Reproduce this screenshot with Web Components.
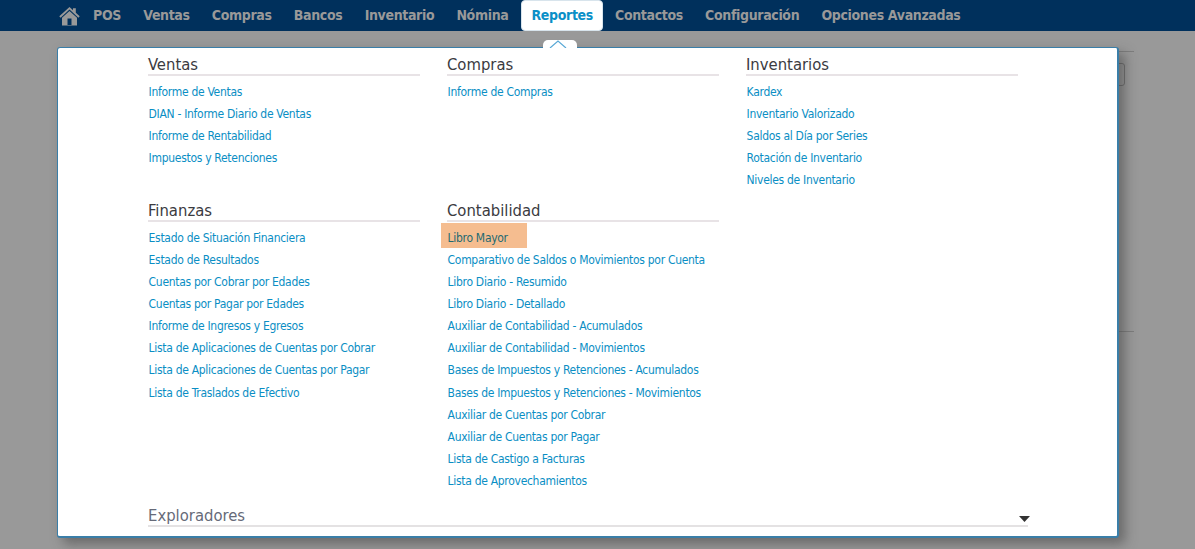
<!DOCTYPE html>
<html lang="es"><head><meta charset="utf-8"><title>Reportes</title>
<style>
html,body{margin:0;height:549px;overflow:hidden;background:#999;font-family:"DejaVu Sans Condensed","DejaVu Sans",sans-serif}
</style></head><body>
<app-shell>
<top-nav slot="nav">
  <nav-item>POS</nav-item><nav-item>Ventas</nav-item><nav-item>Compras</nav-item><nav-item>Bancos</nav-item><nav-item>Inventario</nav-item><nav-item>Nómina</nav-item><nav-item active>Reportes</nav-item><nav-item>Contactos</nav-item><nav-item>Configuración</nav-item><nav-item>Opciones Avanzadas</nav-item>
</top-nav>
<mega-menu slot="menu">
  <menu-section title="Ventas"><menu-link>Informe de Ventas</menu-link><menu-link>DIAN - Informe Diario de Ventas</menu-link><menu-link>Informe de Rentabilidad</menu-link><menu-link>Impuestos y Retenciones</menu-link></menu-section>
  <menu-section title="Compras"><menu-link>Informe de Compras</menu-link></menu-section>
  <menu-section title="Inventarios"><menu-link>Kardex</menu-link><menu-link>Inventario Valorizado</menu-link><menu-link>Saldos al Día por Series</menu-link><menu-link>Rotación de Inventario</menu-link><menu-link>Niveles de Inventario</menu-link></menu-section>
  <menu-section title="Finanzas"><menu-link>Estado de Situación Financiera</menu-link><menu-link>Estado de Resultados</menu-link><menu-link>Cuentas por Cobrar por Edades</menu-link><menu-link>Cuentas por Pagar por Edades</menu-link><menu-link>Informe de Ingresos y Egresos</menu-link><menu-link>Lista de Aplicaciones de Cuentas por Cobrar</menu-link><menu-link>Lista de Aplicaciones de Cuentas por Pagar</menu-link><menu-link>Lista de Traslados de Efectivo</menu-link></menu-section>
  <menu-section title="Contabilidad"><menu-link hot>Libro Mayor</menu-link><menu-link>Comparativo de Saldos o Movimientos por Cuenta</menu-link><menu-link>Libro Diario - Resumido</menu-link><menu-link>Libro Diario - Detallado</menu-link><menu-link>Auxiliar de Contabilidad - Acumulados</menu-link><menu-link>Auxiliar de Contabilidad - Movimientos</menu-link><menu-link>Bases de Impuestos y Retenciones - Acumulados</menu-link><menu-link>Bases de Impuestos y Retenciones - Movimientos</menu-link><menu-link>Auxiliar de Cuentas por Cobrar</menu-link><menu-link>Auxiliar de Cuentas por Pagar</menu-link><menu-link>Lista de Castigo a Facturas</menu-link><menu-link>Lista de Aprovechamientos</menu-link></menu-section>
  <explorer-bar slot="footer">Exploradores</explorer-bar>
</mega-menu>
</app-shell>
<script>
function def(name,css,html,init){
  customElements.define(name,class extends HTMLElement{
    constructor(){super();const r=this.attachShadow({mode:'open'});r.innerHTML='<style>'+css+'</style>'+html;}
    connectedCallback(){if(init)init(this)}
  });
}
def('app-shell',`:host{display:block;position:relative;height:549px;background:#999;overflow:hidden}
 .rule{position:absolute;left:1100px;width:34px;height:1px;background:#7d7d7d}
 .btn{position:absolute;left:1100px;top:63px;width:23px;height:21px;border:1px solid #6f6f6f;border-radius:3px}`,
 `<slot name="nav"></slot><div class="rule" style="top:51px"></div><div class="btn"></div><div class="rule" style="top:331px"></div><slot name="menu"></slot>`);
def('top-nav',`:host{display:flex;align-items:center;height:31px;background:#00305c;padding-left:59px;box-sizing:border-box;font:bold 14px "DejaVu Sans Condensed","DejaVu Sans",sans-serif;letter-spacing:-.35px}
 svg{width:21px;height:20px;margin-right:2px;flex:none}`,
 `<svg viewBox="0 0 21 20"><path fill="#999" d="M10.5 1 0.3 10.3 1.6 11.7 10.5 3.6 19.4 11.7 20.7 10.3 16.8 6.7V2.2H14V4.2Z"/><path fill="#999" fill-rule="evenodd" d="M10.5 5 3 11.8V19.5H18V11.8ZM8.5 12.5H12.5V19H8.5Z"/></svg><slot></slot>`);
def('nav-item',`:host{display:block;height:31px;line-height:31px;padding:0 11.1px;color:#999;white-space:nowrap;box-sizing:border-box}
 :host([active]){background:#fff;color:#0a8fc7;border-radius:4px;border:1px solid #d8e4ec;line-height:29px;padding:0 9.5px;margin:0 .5px 0 1.5px}`,`<slot></slot>`);
def('mega-menu',`:host{display:block;position:absolute;left:57px;top:47px;width:1062px;height:491px;box-sizing:border-box;background:#fff;border:1px solid #3a7ea8;border-bottom-width:2px;border-right-width:2px;border-radius:3px;box-shadow:6px 6px 12px rgba(60,60,60,.5);padding:6px 99px 0 90px}
 .caret{position:absolute;left:485px;top:-8px;width:34px;height:8px;background:#fff;border-radius:5px 5px 0 0;overflow:hidden}
 .caret svg{display:block}
 .grid{display:grid;grid-template-columns:repeat(3,272px);column-gap:27px;grid-template-rows:146px 293px}
 `,`<div class="caret"><svg width="34" height="8"><path d="M7 8 15 1 23 8" fill="#fff" stroke="#5aa9d6" stroke-width="1.2"/></svg></div><div class="grid"><slot></slot></div><slot name="footer"></slot>`);
def('menu-section',`:host{display:block;font-size:12px}
 h3{margin:0;font:400 16.5px/21px "DejaVu Sans Condensed","DejaVu Sans",sans-serif;color:#3b3b3f;border-bottom:2px solid #e8e3e6;height:20px}
 .list{padding-top:4.9px}`,`<h3></h3><div class="list"><slot></slot></div>`,el=>{el.shadowRoot.querySelector('h3').textContent=el.getAttribute('title');el.removeAttribute('title');});
def('menu-link',`:host{display:block;height:22.1px;line-height:22.1px;font-size:12px;letter-spacing:-.3px;padding-left:.6px;color:#0a8ec4;white-space:nowrap}
 :host([hot]){color:#1e6a72;position:relative;z-index:0}
 :host([hot]) .t::before{content:"";position:absolute;z-index:-1;left:-7px;top:-4px;width:86px;height:25px;background:#f5bd90}
 .t{position:relative;z-index:1;display:inline-block}`,`<span class="t"><slot></slot></span>`);
def('explorer-bar',`:host{display:block;position:relative;height:20px;width:880px;margin-top:12px;border-bottom:2px solid #e4e2e3;font:400 16.5px/22px "DejaVu Sans Condensed","DejaVu Sans",sans-serif;color:#666a78}
 svg{position:absolute;right:-2px;top:11px}`,`<slot></slot><svg width="11" height="6"><path d="M0 0H11L5.5 6Z" fill="#333"/></svg>`);
</script>
</body></html>
